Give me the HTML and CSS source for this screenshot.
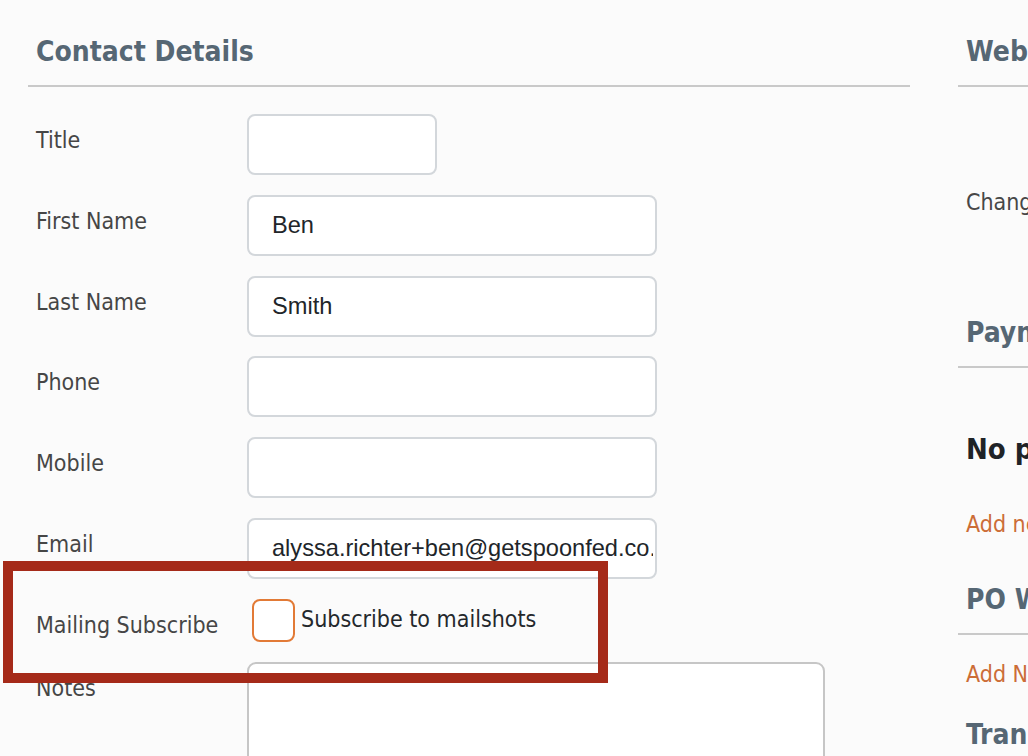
FILE: index.html
```html
<!DOCTYPE html>
<html lang="en">
<head>
<meta charset="utf-8">
<title>Contact Details</title>
<link rel="stylesheet" href="styles.css">
</head>
<body>
<div class="page">
  <section class="col col-left">
    <h2 class="section-title">Contact Details</h2>
    <div class="form">
      <label class="field-label">Title</label>
      <div class="field"><input class="text-input short" type="text" value=""></div>

      <label class="field-label">First Name</label>
      <div class="field"><input class="text-input" type="text" value="Ben"></div>

      <label class="field-label">Last Name</label>
      <div class="field"><input class="text-input" type="text" value="Smith"></div>

      <label class="field-label">Phone</label>
      <div class="field"><input class="text-input" type="text" value=""></div>

      <label class="field-label">Mobile</label>
      <div class="field"><input class="text-input" type="text" value=""></div>

      <label class="field-label">Email</label>
      <div class="field"><input class="text-input" type="text" value="alyssa.richter+ben@getspoonfed.co.uk"></div>

      <label class="field-label">Mailing Subscribe</label>
      <div class="field check-field">
        <span class="checkbox"></span>
        <span class="check-text">Subscribe to mailshots</span>
      </div>

      <label class="field-label">Notes</label>
      <div class="field"><textarea class="notes"></textarea></div>
    </div>
  </section>

  <section class="col col-right">
    <h2 class="section-title">Website Account</h2>
    <p class="plain-text change-row">Change Password</p>

    <h2 class="section-title payment-title">Payment Methods</h2>
    <p class="empty-title">No payment methods</p>
    <a class="link add-payment">Add new payment method</a>

    <h2 class="section-title po-title">PO Whitelist</h2>
    <a class="link add-po">Add New PO Number</a>

    <h2 class="section-title tx-title">Transactions</h2>
  </section>
</div>
<div class="highlight-box"></div>
</body>
</html>
```

FILE: styles.css
```css
html, body {
  margin: 0;
  padding: 0;
  width: 1028px;
  height: 756px;
  overflow: hidden;
  background: #fbfbfb;
}

body {
  position: relative;
  font-family: "DejaVu Sans Condensed", "DejaVu Sans", sans-serif;
  font-stretch: condensed;
  color: #474747;
}

.page {
  display: flex;
  gap: 48px;
  padding-left: 28px;
  width: 2000px;
}

.col {
  width: 882px;
  flex: none;
}

.section-title {
  margin: 35px 0 0;
  padding: 0 0 16px 8px;
  font-size: 28px;
  line-height: 34px;
  font-weight: bold;
  color: #566774;
  border-bottom: 2px solid #c9c9c9;
  white-space: nowrap;
}

.form {
  display: grid;
  grid-template-columns: 219px 1fr;
  row-gap: 19.8px;
  margin-top: 27px;
}

.field-label {
  padding: 12px 0 0 8px;
  font-size: 23px;
  line-height: 28px;
  color: #464646;
}

.field {
  display: flex;
}

.text-input {
  box-sizing: border-box;
  width: 410px;
  height: 61px;
  margin: 0;
  padding: 0 2px 0 23px;
  border: 2px solid #d3d7db;
  border-radius: 8px;
  background: #fff;
  font-family: "Liberation Sans", Arial, sans-serif;
  font-size: 23.6px;
  color: #212529;
  outline: none;
}

.text-input.short {
  width: 190px;
}

.check-field {
  align-items: flex-start;
}

.checkbox {
  box-sizing: border-box;
  width: 43px;
  height: 43px;
  margin-left: 5px;
  border: 2px solid #e27a36;
  border-radius: 8px;
  background: #fff;
  flex: none;
}

.check-text {
  margin-left: 6px;
  padding-top: 6px;
  font-size: 23px;
  line-height: 28px;
  color: #24282c;
}

.notes {
  box-sizing: border-box;
  width: 578px;
  height: 170px;
  margin: 0;
  border: 2px solid #c6c6c6;
  border-radius: 9px;
  background: #fff;
  resize: none;
  outline: none;
}

.plain-text {
  margin: 0;
  padding-left: 8px;
  font-size: 23px;
  line-height: 28px;
  color: #474747;
  white-space: nowrap;
}

.change-row {
  margin-top: 101px;
}

.payment-title {
  margin-top: 100px;
}

.empty-title {
  margin: 64px 0 0;
  padding-left: 8px;
  font-size: 29px;
  line-height: 34px;
  font-weight: bold;
  color: #1f2327;
  white-space: nowrap;
}

.link {
  display: block;
  padding-left: 8px;
  font-size: 23px;
  line-height: 28px;
  color: #cc6d37;
  text-decoration: none;
  white-space: nowrap;
}

.add-payment {
  margin-top: 44px;
}

.po-title {
  margin-top: 45px;
}

.add-po {
  margin-top: 25px;
}

.tx-title {
  margin-top: 30px;
}

.highlight-box {
  position: absolute;
  left: 3px;
  top: 561px;
  width: 605px;
  height: 122px;
  box-sizing: border-box;
  border: 10px solid #a52a19;
  pointer-events: none;
}
```
